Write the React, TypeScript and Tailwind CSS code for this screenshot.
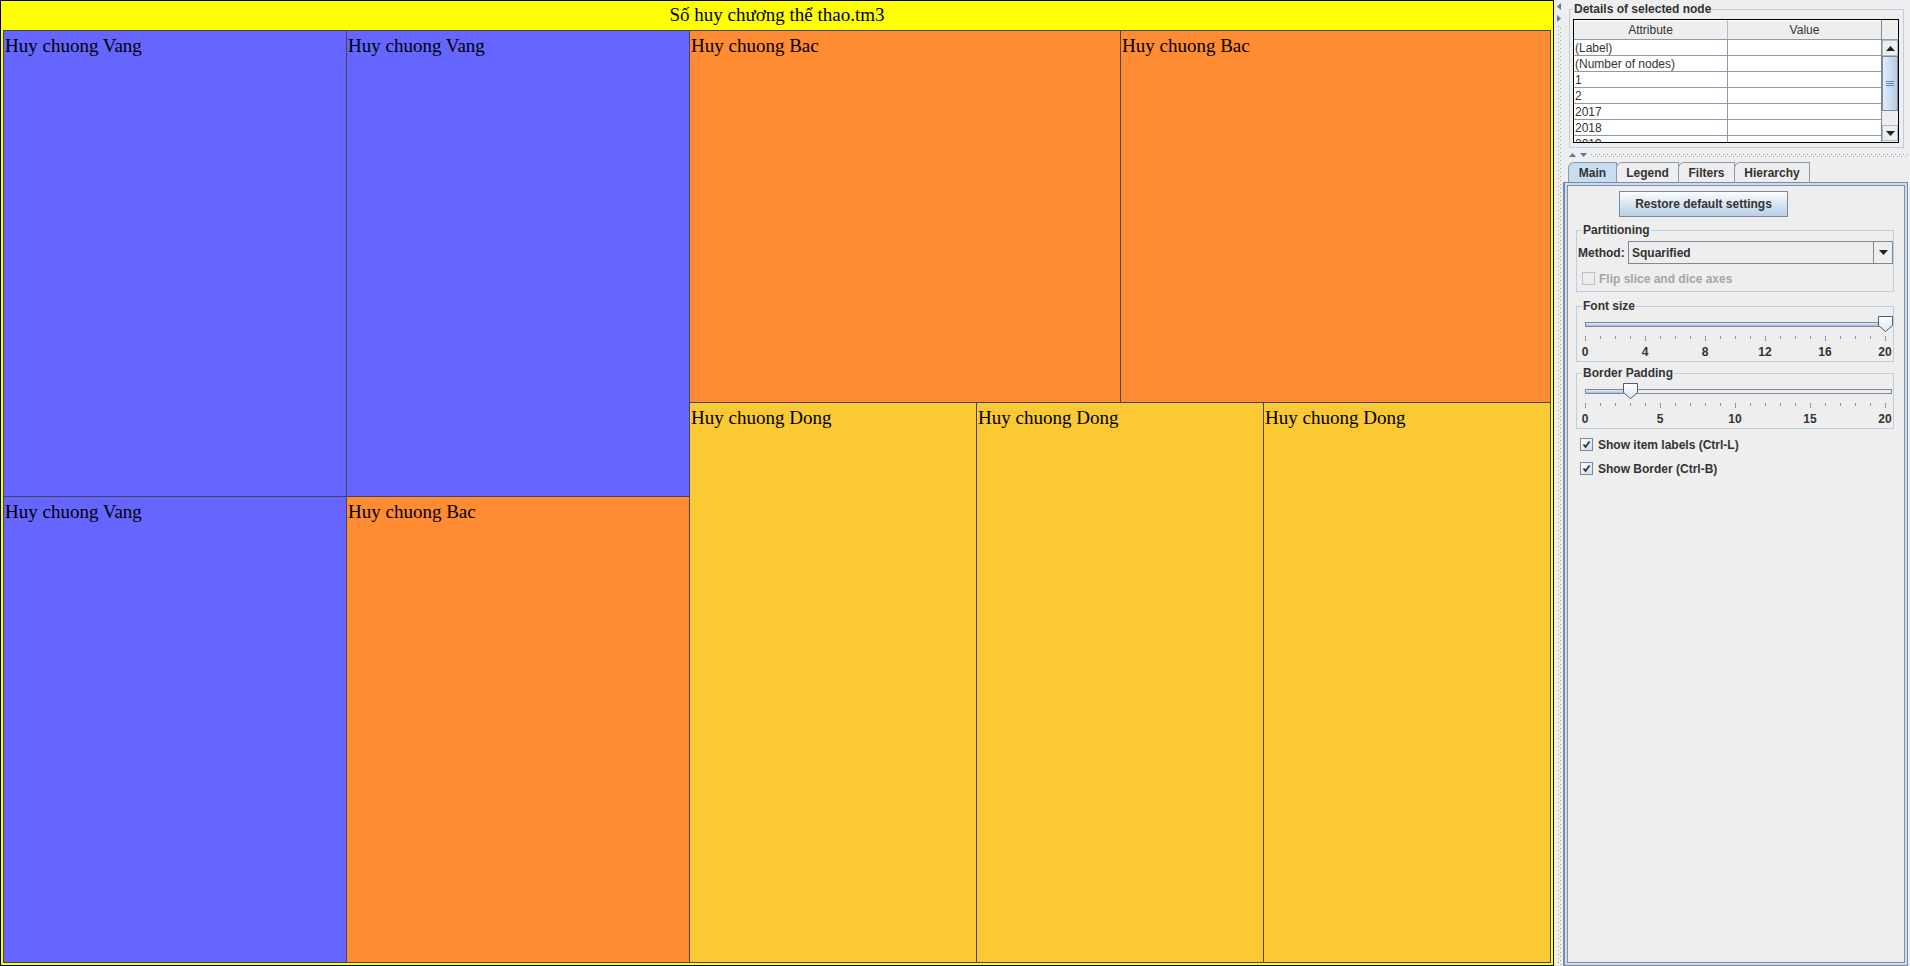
import React from 'react'

// treemap colours, taken from the tm3 view
const VANG = 'bg-[#6666ff]'
const BAC = 'bg-[#ff8b33]'
const DONG = 'bg-[#fac934]'

const sans = "font-['Liberation_Sans',Arial,sans-serif]"

function Tile({ label, className }: { label: string; className: string }) {
  return (
    <div
      className={`${className} shrink-0 overflow-hidden whitespace-nowrap pl-px pt-[4px] font-['Liberation_Serif','Times_New_Roman',serif] text-[19px] leading-[22px] text-black`}
    >
      {label}
    </div>
  )
}

function CheckBox({ checked, disabled }: { checked?: boolean; disabled?: boolean }) {
  return (
    <div
      className={
        disabled
          ? 'w-[13px] h-[13px] shrink-0 border border-[#b8c0c8] bg-[#eeeeee]'
          : 'w-[13px] h-[13px] shrink-0 border border-[#7a8a99] bg-linear-to-br from-white to-[#c8ddf2] flex items-center justify-center'
      }
    >
      {checked && (
        <svg width="9" height="9" viewBox="0 0 9 9">
          <path d="M1.5 4.5 L3.5 7 L7.5 1.5" stroke="#333333" strokeWidth="1.8" fill="none" />
        </svg>
      )}
    </div>
  )
}

function Slider({ value, max, major, labels }: { value: number; max: number; major: number; labels: number[] }) {
  // 300px of tick space, 15px per unit
  const pos = (value / max) * 300
  const ticks = Array.from({ length: max + 1 }, (_, i) => i)
  return (
    <div className="ml-[8px] w-[307px]">
      <div className="relative h-[16px]">
        <div className="absolute left-0 right-0 top-[6px] h-[5px] border border-[#7a8a99] bg-[#eeeeee] overflow-hidden">
          <div className="h-full bg-linear-to-b from-[#e6eef7] to-[#9fbde0]" style={{ width: pos }} />
        </div>
        <svg className="absolute top-0" style={{ left: pos - 7 }} width="15" height="16" viewBox="0 0 15 16">
          <defs>
            <linearGradient id={`th${value}`} x1="0" y1="0" x2="0" y2="1">
              <stop offset="0" stopColor="#ffffff" />
              <stop offset="1" stopColor="#dde6f0" />
            </linearGradient>
          </defs>
          <path d="M0.5 0.5 H14.5 V9.5 L7.5 15.5 L0.5 9.5 Z" fill={`url(#th${value})`} stroke="#4f5f70" />
        </svg>
      </div>
      <div className="mt-[4px] flex w-[301px] h-[5px] justify-between items-start">
        {ticks.map(i => (
          <div key={i} className={i % major === 0 ? 'w-px h-[5px] bg-[#8a96a4]' : 'w-px h-[3px] bg-[#8a96a4]'} />
        ))}
      </div>
      <div className="-ml-[10px] mt-[4px] flex w-[320px] justify-between">
        {labels.map(l => (
          <span key={l} className="w-[20px] text-center text-[12px] font-bold leading-[14px] text-[#333333]">
            {l}
          </span>
        ))}
      </div>
    </div>
  )
}

function Group({ title, className, children }: { title: string; className?: string; children: React.ReactNode }) {
  return (
    <fieldset className={`border border-[#b8cfe5] ${className ?? ''}`}>
      <legend className="ml-[5px] px-px text-[12px] font-bold leading-[15px] text-[#333333]">{title}</legend>
      {children}
    </fieldset>
  )
}

const rows = ['(Label)', '(Number of nodes)', '1', '2', '2017', '2018', '2019']

function DetailsTable() {
  return (
    <div className="ml-[3px] mt-[2px] w-[326px] h-[124px] border border-black bg-white flex overflow-hidden">
      <div className="flex-1 overflow-hidden">
        <div className="flex h-[20px] border-b border-[#8a9aaa] bg-[#eeeeee] text-[12px] text-[#333333]">
          <div className="w-[154px] border-r border-[#b0bac4] border-t border-t-white flex items-center justify-center">Attribute</div>
          <div className="flex-1 border-t border-t-white flex items-center justify-center">Value</div>
        </div>
        {rows.map(r => (
          <div key={r} className="flex h-[16px] border-b border-[#8a9aaa] text-[12px] leading-[16px] text-[#333333]">
            <div className="w-[154px] border-r border-[#8a9aaa] pl-px">{r}</div>
            <div className="flex-1" />
          </div>
        ))}
      </div>
      <div className="w-[17px] border-l border-[#7a8a99] flex flex-col bg-[#eeeeee]">
        <div className="h-[20px] border-b border-[#8a9aaa]" />
        <div className="h-[16px] border border-[#b0bac4] bg-[#eeeeee] flex items-center justify-center">
          <svg width="9" height="5" viewBox="0 0 9 5"><path d="M4.5 0 L9 5 H0 Z" fill="#222" /></svg>
        </div>
        <div className="h-[55px] border border-[#7a8a99] bg-linear-to-r from-[#e2ecf7] to-[#b4cde8] flex flex-col items-center justify-center gap-px">
          <div className="w-[8px] h-px bg-[#6a86b4]" />
          <div className="w-[8px] h-px bg-[#6a86b4]" />
          <div className="w-[8px] h-px bg-[#6a86b4]" />
        </div>
        <div className="flex-1" />
        <div className="h-[16px] mb-px border border-[#b0bac4] bg-[#eeeeee] flex items-center justify-center">
          <svg width="9" height="5" viewBox="0 0 9 5"><path d="M0 0 H9 L4.5 5 Z" fill="#222" /></svg>
        </div>
      </div>
    </div>
  )
}

const tabs = [
  { label: 'Main', w: 'w-[49px]', selected: true },
  { label: 'Legend', w: 'w-[63px]', selected: false },
  { label: 'Filters', w: 'w-[57px]', selected: false },
  { label: 'Hierarchy', w: 'w-[76px]', selected: false },
]

export default function App() {
  return (
    <div className={`flex w-[1910px] h-[966px] overflow-hidden bg-[#eeeeee] ${sans}`}>
      {/* treemap */}
      <div className="w-[1554px] h-full shrink-0 border border-black bg-[#ffff00] flex flex-col">
        <div className="h-[29px] flex items-center justify-center font-['Liberation_Serif','Times_New_Roman',serif] text-[19px] text-black">
          Số huy chương thể thao.tm3
        </div>
        <div className="flex-1 mx-[2px] mb-[2px] border border-[#404652] bg-[#404652] flex gap-px">
          <div className="w-[342px] flex flex-col gap-px">
            <Tile label="Huy chuong Vang" className={`${VANG} h-[465px]`} />
            <Tile label="Huy chuong Vang" className={`${VANG} flex-1`} />
          </div>
          <div className="w-[342px] flex flex-col gap-px">
            <Tile label="Huy chuong Vang" className={`${VANG} h-[465px]`} />
            <Tile label="Huy chuong Bac" className={`${BAC} flex-1`} />
          </div>
          <div className="flex-1 flex flex-col gap-px">
            <div className="h-[371px] flex gap-px">
              <Tile label="Huy chuong Bac" className={`${BAC} w-[430px]`} />
              <Tile label="Huy chuong Bac" className={`${BAC} flex-1`} />
            </div>
            <div className="flex-1 flex gap-px">
              <Tile label="Huy chuong Dong" className={`${DONG} w-[286px]`} />
              <Tile label="Huy chuong Dong" className={`${DONG} w-[286px]`} />
              <Tile label="Huy chuong Dong" className={`${DONG} flex-1`} />
            </div>
          </div>
        </div>
      </div>

      {/* vertical splitter */}
      <div className="w-[9px] shrink-0 flex flex-col pl-[3px]">
        <svg className="mt-[3px]" width="4" height="7" viewBox="0 0 4 7"><path d="M4 0 V7 L0 3.5 Z" fill="#5a7aa8" /></svg>
        <svg className="mt-[5px]" width="4" height="7" viewBox="0 0 4 7"><path d="M0 0 V7 L4 3.5 Z" fill="#5a7aa8" /></svg>
        <div className="mt-[4px] ml-[1px] flex-1 flex gap-px">
          <div className="w-px h-full bg-[repeating-linear-gradient(to_bottom,#9aa2aa_0_1px,transparent_1px_4px)]" />
          <div className="w-px h-full mt-[2px] bg-[repeating-linear-gradient(to_bottom,#9aa2aa_0_1px,transparent_1px_4px)]" />
        </div>
      </div>

      {/* right panel */}
      <div className="flex-1 flex flex-col">
        <fieldset className="mt-[2px] ml-[6px] mr-[6px] h-[146px] border border-[#b8cfe5]">
          <legend className="ml-[3px] px-px text-[12px] font-bold leading-[15px] text-[#333333]">Details of selected node</legend>
          <DetailsTable />
        </fieldset>

        {/* horizontal splitter */}
        <div className="h-[14px] flex items-center gap-[4px] pl-[6px] pr-[2px]">
          <svg width="7" height="4" viewBox="0 0 7 4"><path d="M0 4 H7 L3.5 0 Z" fill="#5a7aa8" /></svg>
          <svg width="7" height="4" viewBox="0 0 7 4"><path d="M0 0 H7 L3.5 4 Z" fill="#5a7aa8" /></svg>
          <div className="flex-1 flex flex-col gap-px">
            <div className="h-px bg-[repeating-linear-gradient(to_right,#9aa2aa_0_1px,transparent_1px_4px)]" />
            <div className="h-px ml-[2px] bg-[repeating-linear-gradient(to_right,#9aa2aa_0_1px,transparent_1px_4px)]" />
          </div>
        </div>

        {/* tabs */}
        <div className="h-[20px] flex pl-[5px]">
          {tabs.map((t, i) => (
            <div
              key={t.label}
              className={`${t.w} ${i > 0 ? '-ml-px' : ''} h-[20px] rounded-tl-[6px] border border-b-0 border-[#8a9aaa] flex items-center justify-center text-[12px] font-bold text-[#333333] ${
                t.selected ? 'bg-[#c8ddf2]' : 'bg-[#eeeeee]'
              }`}
            >
              {t.label}
            </div>
          ))}
        </div>

        <div className="flex-1 mr-[2px] border border-l-2 border-[#7a8aa0] bg-[#c8ddf2] p-[2px] flex">
          <div className="flex-1 border border-[#8090a0] bg-[#eeeeee] flex flex-col items-start">
            <button className="mt-[5px] ml-[51px] w-[169px] h-[26px] border border-[#7a8a99] bg-linear-to-b from-[#fbfcfe] to-[#b8cfe5] text-[12px] font-bold text-[#333333]">
              Restore default settings
            </button>

            <Group title="Partitioning" className="mt-[6px] ml-[8px] w-[318px] pb-[6px]">
              <div className="mt-[3px] h-[23px] flex items-center">
                <span className="ml-px text-[12px] font-bold text-[#333333]">Method:</span>
                <div className="ml-auto w-[265px] h-[23px] border border-[#7a8a99] bg-[#eeeeee] flex">
                  <span className="flex-1 pl-[3px] flex items-center text-[12px] font-bold text-[#333333]">Squarified</span>
                  <div className="w-[19px] border-l border-[#7a8a99] flex items-center justify-center">
                    <svg width="9" height="5" viewBox="0 0 9 5"><path d="M0 0 H9 L4.5 5 Z" fill="#222" /></svg>
                  </div>
                </div>
              </div>
              <div className="mt-[8px] ml-[5px] h-[13px] flex items-center gap-[4px]">
                <CheckBox disabled />
                <span className="text-[12px] font-bold text-[#a5a5a5]">Flip slice and dice axes</span>
              </div>
            </Group>

            <Group title="Font size" className="mt-[7px] ml-[8px] w-[318px] pb-[2px]">
              <div className="mt-[2px]">
                <Slider value={20} max={20} major={4} labels={[0, 4, 8, 12, 16, 20]} />
              </div>
            </Group>

            <Group title="Border Padding" className="mt-[4px] ml-[8px] w-[318px] pb-[2px]">
              <div className="mt-[2px]">
                <Slider value={3} max={20} major={5} labels={[0, 5, 10, 15, 20]} />
              </div>
            </Group>

            <div className="mt-[9px] ml-[12px] h-[13px] flex items-center gap-[5px]">
              <CheckBox checked />
              <span className="text-[12px] font-bold text-[#333333]">Show item labels (Ctrl-L)</span>
            </div>
            <div className="mt-[11px] ml-[12px] h-[13px] flex items-center gap-[5px]">
              <CheckBox checked />
              <span className="text-[12px] font-bold text-[#333333]">Show Border (Ctrl-B)</span>
            </div>
          </div>
        </div>
      </div>
    </div>
  )
}
